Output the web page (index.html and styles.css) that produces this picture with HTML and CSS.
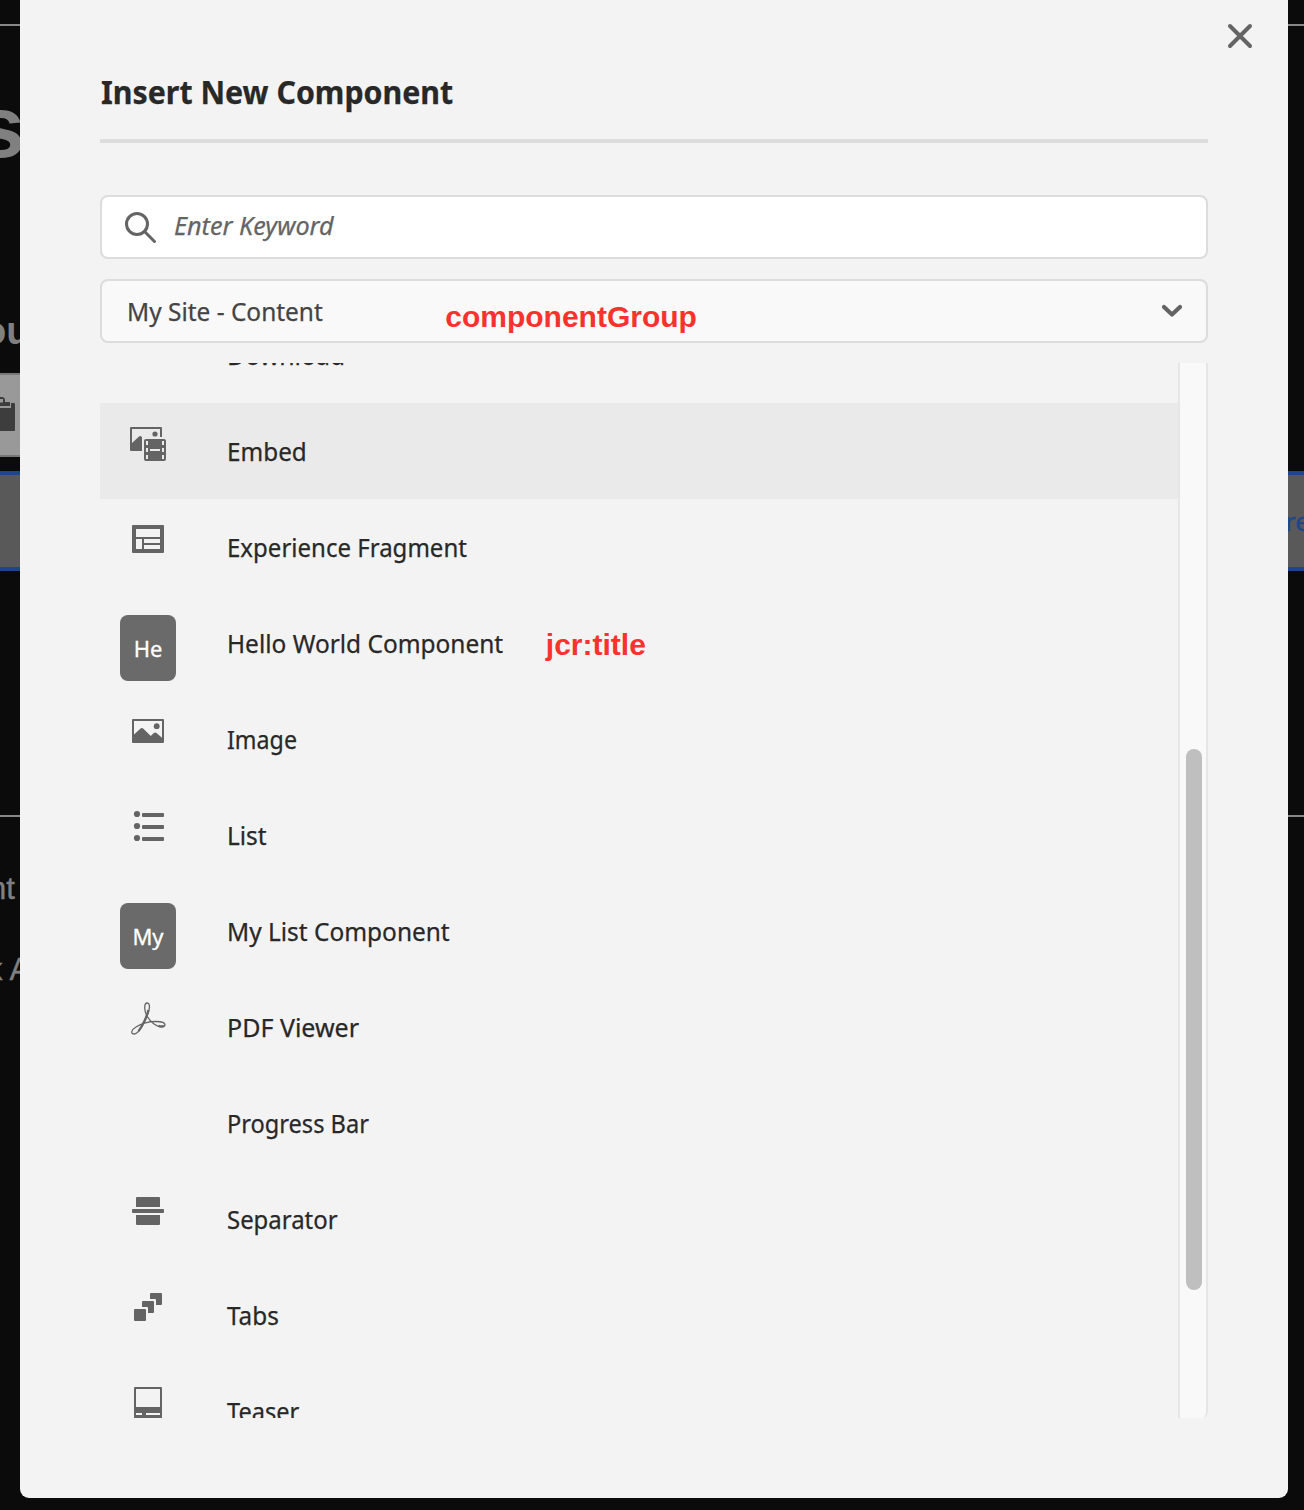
FILE: index.html
```
<!DOCTYPE html>
<html lang="en">
<head>
<meta charset="utf-8">
<title>Insert New Component</title>
<link rel="stylesheet" href="styles.css">
</head>
<body>
<div class="page">
  <div class="edge edge-left">
    <div class="rule"></div>
    <div class="hero">s</div>
    <div class="sub">ou</div>
    <div class="tool"><svg width="20" height="36" viewBox="0 0 20 36"><path d="M0 6H14Q15 6 15 7V33Q15 34 14 34H0Z" fill="#3d3d3d"/><path d="M0 0H11V11H0Z" fill="#999"/><path d="M0 0H2Q5 0 5 3.500V5H10V9H0V5.500H3V2H0Z" fill="#3d3d3d"/></svg></div>
    <div class="drop"></div>
    <div class="rule rule-low"></div>
    <div class="copy copy-a">nt</div>
    <div class="copy copy-b">k A</div>
  </div>
  <div class="edge edge-right">
    <div class="rule"></div>
    <div class="drop drop-right">re</div>
    <div class="rule rule-low"></div>
  </div>
</div>
<main class="dialog">
  <svg class="close" width="26" height="26" viewBox="0 0 26 26"><path d="M3 3L23 23M23 3L3 23"/></svg>
  <h1 class="title"><span class="fit t-title">Insert New Component</span></h1>
  <div class="field search">
    <svg width="34" height="34" viewBox="0 0 34 34"><circle cx="13" cy="13" r="10.5"/><path d="M20.800 20.800L30.500 30.500"/></svg>
    <span class="fit t-search">Enter Keyword</span>
  </div>
  <div class="field select">
    <span class="fit t-select">My Site - Content</span>
    <b class="note note-group">componentGroup</b>
    <svg width="22" height="14" viewBox="0 0 22 14"><path d="M3 3L11 10.500L19 3"/></svg>
  </div>
  <div class="scroller">
    <ul class="list">
      <li class="row"><i class="slot"></i><span class="fit t-download">Download</span></li>
      <li class="row active"><i class="slot"><svg class="icon" viewBox="0 0 36 36"><path fill-rule="evenodd" d="M1 0H31Q32 0 32 1V10H30V2H2V16L9 9.500Q10 8.500 12 10V24H1Q0 24 0 23V1Q0 0 1 0Z"/><circle cx="25" cy="7" r="2.6"/><path fill-rule="evenodd" d="M16 12H34Q36 12 36 14V32Q36 34 34 34H16Q14 34 14 32V14Q14 12 16 12ZM16 14V18H18V14ZM16 21V25H18V21ZM16 28V32H18V28ZM32 14V18H34V14ZM32 21V25H34V21ZM32 28V32H34V28ZM20 22V24H30V22Z"/></svg></i><span class="fit t-embed">Embed</span></li>
      <li class="row"><i class="slot"><svg class="icon" viewBox="0 0 36 36"><path fill-rule="evenodd" d="M3 2H33Q34 2 34 3V29Q34 30 33 30H3Q2 30 2 29V3Q2 2 3 2ZM6 6V14H30V6ZM6 16V26H12V16ZM14 16V20H30V16ZM14 22V26H30V22Z"/></svg></i><span class="fit t-experience">Experience Fragment</span></li>
      <li class="row"><i class="slot"><em class="tile">He</em></i><span class="fit t-hello">Hello World Component</span><b class="note note-title">jcr:title</b></li>
      <li class="row"><i class="slot"><svg class="icon" viewBox="0 0 36 36"><path fill-rule="evenodd" d="M3 4H33Q34 4 34 5V27Q34 28 33 28H3Q2 28 2 27V5Q2 4 3 4ZM4 6V19.500L10.600 13.500Q12 12.400 13.400 13.700L20.800 21L23.500 18.200Q25 16.800 26.500 18L32 22.800V6Z"/><circle cx="26.7" cy="11.2" r="2.9"/></svg></i><span class="fit t-image">Image</span></li>
      <li class="row"><i class="slot"><svg class="icon" viewBox="0 0 36 36"><circle cx="7" cy="3" r="3.1"/><circle cx="7" cy="15" r="3.1"/><circle cx="7" cy="27" r="3.1"/><rect x="12" y="2" width="22" height="4" rx="1"/><rect x="12" y="14" width="22" height="4" rx="1"/><rect x="12" y="26" width="22" height="4" rx="1"/></svg></i><span class="fit t-list">List</span></li>
      <li class="row"><i class="slot"><em class="tile">My</em></i><span class="fit t-mylist">My List Component</span></li>
      <li class="row"><i class="slot"><svg class="icon line" viewBox="0 0 36 36"><path d="M17.300 14C13.500 7 14.200 0 17.200 0C20.600 0 20 7 16.500 14.500C12.500 23.500 8 31 4.200 31C.5 31 1 27 6 24C11 20.800 19 18.500 26 18.500C32 18.500 35 19.800 35 21.800C35 24.800 29 24.700 24 21C20.500 18.500 18.800 16.200 17.300 13.500"/><path class="heavy" d="M18.400 7C17.300 12.500 12.500 23 8.500 28.200M28.500 22.700Q32 24.300 34 22.600"/></svg></i><span class="fit t-pdf">PDF Viewer</span></li>
      <li class="row"><i class="slot"></i><span class="fit t-progress">Progress Bar</span></li>
      <li class="row"><i class="slot"><svg class="icon" viewBox="0 0 36 36"><path d="M7 2H29Q30 2 30 3V12H6V3Q6 2 7 2ZM6 20H30V29Q30 30 29 30H7Q6 30 6 29Z"/><rect x="2" y="14" width="32" height="4" rx="1"/></svg></i><span class="fit t-separator">Separator</span></li>
      <li class="row"><i class="slot"><svg class="icon" viewBox="0 0 36 36"><rect x="4" y="18" width="12" height="12" rx="1"/><path d="M13 10H23Q24 10 24 11V21Q24 22 23 22H18V17Q18 16 17 16H12V11Q12 10 13 10ZM21 2H31Q32 2 32 3V13Q32 14 31 14H26V9Q26 8 25 8H20V3Q20 2 21 2Z"/></svg></i><span class="fit t-tabs">Tabs</span></li>
      <li class="row"><i class="slot"><svg class="icon" viewBox="0 0 36 36"><path fill-rule="evenodd" d="M5 0H31Q32 0 32 1V34H4V1Q4 0 5 0ZM6 2V20H30V2ZM6 26V28H12V26ZM16 26V28H30V26Z"/></svg></i><span class="fit t-teaser">Teaser</span></li>
    </ul>
    <div class="track"><div class="thumb"></div></div>
  </div>
</main>
</body>
</html>
```
FILE: styles.css
```
* { box-sizing: border-box; }
body { margin: 0; height: 1510px; overflow: hidden; background: #0b0b0b; font-family: "Noto Sans", sans-serif; position: relative; }

/* dimmed editor behind the dialog */
.page { display: flex; justify-content: space-between; height: 1510px; }
.edge { overflow: hidden; padding-top: 24px; color: #808080; font-family: "Liberation Sans", Arial, sans-serif; white-space: nowrap; }
.edge-left { width: 20px; }
.edge-right { width: 16px; }
.rule { height: 2px; background: #888; }
.hero { height: 274px; padding-top: 56px; margin-left: -24px; font-size: 88px; line-height: 90px; font-weight: 700; }
.sub { height: 73px; padding-top: 9px; margin-left: -17px; font-size: 38px; line-height: 44px; font-weight: 700; }
.tool { height: 84px; background: #999; border: solid #777; border-width: 2px 0; padding-top: 22px; }
.tool svg { display: block; }
.drop { height: 100px; margin-top: 14px; background: #595959; border: solid #1d478a; border-width: 4px 0; }
.drop-right { margin-top: 445px; color: #1d478a; font: 26px/92px "Noto Sans", sans-serif; text-indent: -3px; -webkit-text-stroke: .4px; }
.rule-low { margin-top: 244px; }
.copy { font-size: 31px; line-height: 36px; -webkit-text-stroke: .4px; }
.copy-a { margin: 54px 0 0 -11px; }
.copy-b { margin: 45px 0 0 -13px; }

/* dialog */
.dialog { position: absolute; left: 20px; top: 0; width: 1268px; height: 1498px; padding: 66px 80px 0; background: #f3f3f3; border-radius: 0 0 9px 9px; }
.close { position: absolute; right: 35px; top: 23px; fill: none; stroke: #646464; stroke-width: 4; stroke-linecap: round; }
.title { margin: 0 0 52px; height: 77px; padding-left: 1px; border-bottom: 4px solid #dcdcdc; font-size: 33px; line-height: 51px; font-weight: 700; color: #282828; }
.field { display: flex; align-items: center; height: 64px; border: 2px solid #dcdcdc; border-radius: 8px; font-size: 26px; line-height: 36px; white-space: nowrap; }
.field svg { fill: none; stroke: #646464; flex: none; }
.search { padding-left: 22px; margin-bottom: 20px; background: #fff; color: #646464; font-style: italic; }
.search svg { stroke-width: 3; stroke-linecap: round; margin: 2px 16px 0 0; }
.select { padding: 0 23px 0 25px; background: #f9f9f9; color: #444; }
.select svg { margin-left: auto; stroke-width: 4.2; stroke-linecap: round; stroke-linejoin: round; }
.note { color: #fa322d; font: 700 30px/36px "Liberation Sans", Arial, sans-serif; }
.note-group { margin: 12px 0 0 110px; }
.note-title { margin: 2px 0 0 25px; }

/* labels are slightly condensed */
.fit { display: inline-block; transform-origin: 0 50%; -webkit-text-stroke: .25px; }
.t-title { transform: scaleX(.919); }
.t-search { margin-top: -4px; transform: scaleX(.97); }
.t-select { transform: scaleX(.94); }
.t-download { transform: scaleX(.955); }
.t-embed { transform: scaleX(.934); }
.t-experience { transform: scaleX(.924); }
.t-hello, .t-list, .t-mylist { transform: scaleX(.94); }
.t-image { transform: scaleX(.893); }
.t-pdf { transform: scaleX(.962); }
.t-progress { transform: scaleX(.907); }
.t-separator { transform: scaleX(.92); }
.t-tabs { transform: scaleX(.935); }
.t-teaser { transform: scaleX(.907); }

.scroller { display: flex; height: 1055px; margin-top: 20px; overflow: hidden; }
.list { list-style: none; margin: -56px 0 0; padding: 0; flex: 1; }
.row { display: flex; align-items: flex-start; height: 96px; padding: 30px 0 0 20px; font-size: 26px; line-height: 36px; color: #282828; white-space: nowrap; }
.active { background: #eaeaea; }
.slot { flex: none; width: 56px; height: 66px; margin: -10px 51px 0 0; font-style: normal; }
.icon { display: block; width: 36px; height: 36px; margin: 4px 0 0 10px; fill: #646464; overflow: visible; }
.line { fill: none; stroke: #646464; stroke-width: 1.3; }
.heavy { stroke-width: 2.2; }
.tile { display: block; width: 56px; height: 66px; border-radius: 8px; background: #6a6a6a; color: #fff; font-style: normal; font-size: 22px; line-height: 66px; text-align: center; -webkit-text-stroke: .3px; }
.track { width: 30px; padding: 386px 4px 0 6px; border: solid #e6e6e6; border-width: 0 2px; background: #f9f9f9; border-radius: 0 0 6px 0; }
.thumb { width: 16px; height: 541px; border-radius: 8px; background: #bfbfbf; }
```
